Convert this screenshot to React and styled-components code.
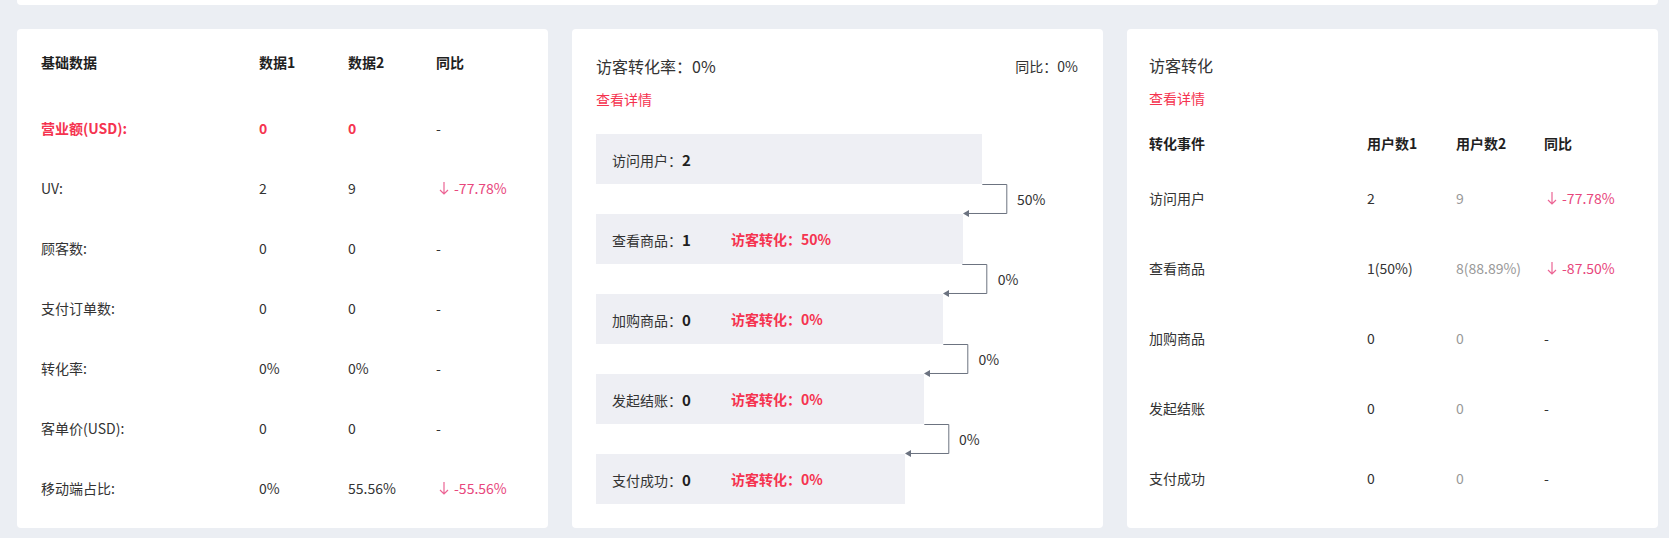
import React from "react";
import styled, { createGlobalStyle } from "styled-components";

const GlobalStyle = createGlobalStyle`
  html, body {
    margin: 0;
    padding: 0;
    background: #ebeef3;
  }
  body {
    font-family: "Noto Sans CJK SC", "Noto Sans", "Liberation Sans", sans-serif;
    color: #333333;
    font-size: 14px;
  }
`;

const Page = styled.div`
  padding: 0 11px 0 17px;
  width: 1669px;
  box-sizing: border-box;
`;

const TopStrip = styled.div`
  height: 5px;
  background: #ffffff;
  border-radius: 0 0 4px 4px;
  margin-bottom: 24px;
`;

const CardRow = styled.div`
  display: grid;
  grid-template-columns: repeat(3, 1fr);
  gap: 24px;
`;

const Card = styled.div`
  background: #ffffff;
  border-radius: 4px;
  padding: ${(p) => p.$pad || "25px 24px 23px"};
  box-sizing: border-box;
  height: 499px;
`;

const Table = styled.div`
  display: flex;
  flex-direction: column;
  margin-top: ${(p) => p.$mt || 0}px;
`;

const TableRow = styled.div`
  display: grid;
  grid-template-columns: 218px 89px 88px 1fr;
  align-items: center;
  height: ${(p) => p.$h}px;
  margin-bottom: ${(p) => p.$mb || 0}px;
  line-height: 20px;
`;

const HeadCell = styled.div`
  font-weight: 700;
  color: #1f1f1f;
  font-size: 14px;
`;

const Cell = styled.div`
  font-size: 14px;
  color: ${(p) => (p.$red ? "#f5334f" : p.$muted ? "#999999" : "#333333")};
  font-weight: ${(p) => (p.$red ? 700 : 400)};
  white-space: nowrap;
`;

const Compare = styled.div`
  display: flex;
  align-items: center;
  gap: 5px;
  color: #e8467c;
  font-size: 14px;
  padding-left: 3px;
`;

const TitleRow = styled.div`
  display: flex;
  justify-content: space-between;
  align-items: center;
  height: 24px;
`;

const Title = styled.div`
  font-size: 16px;
  color: #333333;
  line-height: 24px;
`;

const SideNote = styled.div`
  font-size: 14px;
  color: #333333;
  padding-right: 1px;
`;

const DetailLink = styled.a`
  display: block;
  margin-top: 11px;
  font-size: 14px;
  line-height: 20px;
  color: #f5334f;
  text-decoration: none;
  cursor: pointer;
`;

const Funnel = styled.div`
  margin-top: 25px;
  display: flex;
  flex-direction: column;
`;

const Bar = styled.div`
  height: 50px;
  background: #eeeff4;
  display: flex;
  align-items: center;
  padding-left: 16px;
  box-sizing: border-box;
  font-size: 14px;
`;

const StepName = styled.span`
  width: 119px;
  color: #333333;
  b {
    font-weight: 700;
    color: #1f1f1f;
    font-size: 15px;
  }
`;

const StepRate = styled.span`
  color: #f5334f;
  font-weight: 700;
`;

const Connector = styled.div`
  height: 30px;
  display: flex;
  align-items: center;
  position: relative;
  z-index: 1;

  svg {
    overflow: visible;
  }
`;

const ConnectorLabel = styled.span`
  margin-left: 10px;
  font-size: 14px;
  color: #333333;
`;

const DownArrow = () => (
  <svg width="10" height="14" viewBox="0 0 10 14" fill="none">
    <path d="M5 1v12M1 9l4 4 4-4" stroke="#ec6494" strokeWidth="1.2" />
  </svg>
);

const baseRows = [
  { name: "营业额(USD):", a: "0", b: "0", c: "-", red: true },
  { name: "UV:", a: "2", b: "9", c: "-77.78%", down: true },
  { name: "顾客数:", a: "0", b: "0", c: "-" },
  { name: "支付订单数:", a: "0", b: "0", c: "-" },
  { name: "转化率:", a: "0%", b: "0%", c: "-" },
  { name: "客单价(USD):", a: "0", b: "0", c: "-" },
  { name: "移动端占比:", a: "0%", b: "55.56%", c: "-55.56%", down: true },
];

const steps = [
  { name: "访问用户", value: "2" },
  { name: "查看商品", value: "1", rate: "50%" },
  { name: "加购商品", value: "0", rate: "0%" },
  { name: "发起结账", value: "0", rate: "0%" },
  { name: "支付成功", value: "0", rate: "0%" },
];
const stepRatios = [1, 0.95, 0.9, 0.85, 0.8];
const stepLinks = ["50%", "0%", "0%", "0%"];
const BAR_MAX = 386;

const events = [
  { name: "访问用户", a: "2", b: "9", c: "-77.78%", down: true },
  { name: "查看商品", a: "1(50%)", b: "8(88.89%)", c: "-87.50%", down: true },
  { name: "加购商品", a: "0", b: "0", c: "-" },
  { name: "发起结账", a: "0", b: "0", c: "-" },
  { name: "支付成功", a: "0", b: "0", c: "-" },
];

const CompareCell = ({ value, down }) =>
  down ? (
    <Compare>
      <DownArrow />
      {value}
    </Compare>
  ) : (
    <Cell>{value}</Cell>
  );

const StepConnector = ({ from, to, label }) => {
  const w = from - to + 25;
  return (
    <Connector>
      <div style={{ width: to }} />
      <svg width={w} height="30" viewBox={`0 0 ${w} 30`} fill="none">
        <polyline
          points={`${from - to},0.5 ${w - 0.5},0.5 ${w - 0.5},29.5 5,29.5`}
          stroke="#6b7280"
          strokeWidth="1"
        />
        <polygon points="0,29.5 6,26 6,33" fill="#6b7280" />
      </svg>
      <ConnectorLabel>{label}</ConnectorLabel>
    </Connector>
  );
};

const App = () => {
  return (
    <Page>
      <GlobalStyle />
      <TopStrip />
      <CardRow>
        <Card $pad="18px 24px 10px">
          <Table>
            <TableRow $h={30} $mb={21}>
              <HeadCell>基础数据</HeadCell>
              <HeadCell>数据1</HeadCell>
              <HeadCell>数据2</HeadCell>
              <HeadCell>同比</HeadCell>
            </TableRow>
            {baseRows.map((r) => (
              <TableRow key={r.name} $h={60}>
                <Cell $red={r.red}>{r.name}</Cell>
                <Cell $red={r.red}>{r.a}</Cell>
                <Cell $red={r.red}>{r.b}</Cell>
                <CompareCell value={r.c} down={r.down} />
              </TableRow>
            ))}
          </Table>
        </Card>

        <Card>
          <TitleRow>
            <Title>访客转化率：0%</Title>
            <SideNote>同比：0%</SideNote>
          </TitleRow>
          <DetailLink>查看详情</DetailLink>
          <Funnel>
            {steps.map((s, i) => (
              <React.Fragment key={s.name}>
                {i > 0 && (
                  <StepConnector
                    from={BAR_MAX * stepRatios[i - 1]}
                    to={BAR_MAX * stepRatios[i]}
                    label={stepLinks[i - 1]}
                  />
                )}
                <Bar style={{ width: BAR_MAX * stepRatios[i] }}>
                  <StepName>
                    {s.name}：<b>{s.value}</b>
                  </StepName>
                  {s.rate && <StepRate>访客转化：{s.rate}</StepRate>}
                </Bar>
              </React.Fragment>
            ))}
          </Funnel>
        </Card>

        <Card $pad="24px 24px 15px 22px">
          <Title>访客转化</Title>
          <DetailLink>查看详情</DetailLink>
          <Table $mt={20}>
            <TableRow $h={30} $mb={5}>
              <HeadCell>转化事件</HeadCell>
              <HeadCell>用户数1</HeadCell>
              <HeadCell>用户数2</HeadCell>
              <HeadCell>同比</HeadCell>
            </TableRow>
            {events.map((r) => (
              <TableRow key={r.name} $h={70}>
                <Cell>{r.name}</Cell>
                <Cell>{r.a}</Cell>
                <Cell $muted>{r.b}</Cell>
                <CompareCell value={r.c} down={r.down} />
              </TableRow>
            ))}
          </Table>
        </Card>
      </CardRow>
    </Page>
  );
};

export default App;
